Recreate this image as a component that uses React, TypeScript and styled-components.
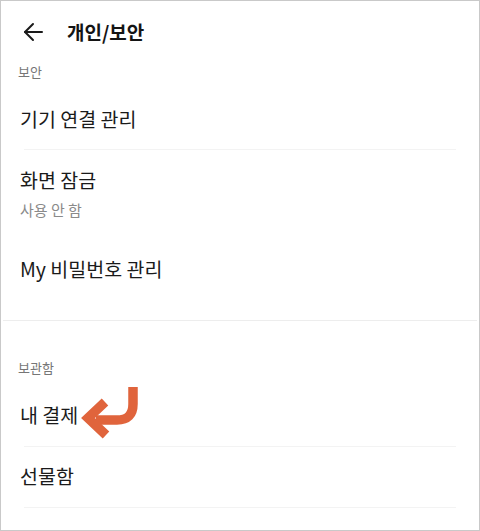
import React from "react";
import styled, { createGlobalStyle } from "styled-components";

const GlobalStyle = createGlobalStyle`
  html, body { margin: 0; padding: 0; background: #ffffff; }
  body { font-family: "Noto Sans CJK KR", "Noto Sans", sans-serif; -webkit-font-smoothing: antialiased; }
  * { box-sizing: border-box; }
`;

const Screen = styled.div`
  width: 480px;
  height: 531px;
  border: 1px solid #c9c9c9;
  background: #fff;
  overflow: hidden;
  display: flex;
  flex-direction: column;
`;

const Header = styled.header`
  height: 63px;
  display: grid;
  grid-template-columns: 20px auto;
  column-gap: 24px;
  justify-content: start;
  align-items: center;
  padding: 0 0 1px 22px;
  flex-shrink: 0;
`;

const BackButton = styled.button`
  width: 20px;
  height: 20px;
  padding: 0;
  margin: 0;
  border: 0;
  background: none;
  display: block;
  color: #1a1a1a;
  svg { display: block; }
`;

const Title = styled.h1`
  margin: 0;
  font-size: 19px;
  line-height: 26px;
  font-weight: 700;
  color: #141414;
`;

const Section = styled.section<{ $top?: number }>`
  display: flex;
  flex-direction: column;
  padding-top: ${(p) => p.$top ?? 0}px;
`;

const SectionLabel = styled.div`
  padding: 0 17px 10px;
  font-size: 13px;
  line-height: 16px;
  color: #767676;
`;

const Row = styled.div<{ $height?: number; $divider?: boolean }>`
  position: relative;
  min-height: ${(p) => p.$height ?? 60}px;
  padding: 0 19px 3px;
  display: flex;
  flex-direction: column;
  justify-content: center;
  gap: 8px;
  &::after {
    content: "";
    display: ${(p) => (p.$divider ? "block" : "none")};
    position: absolute;
    left: 23px;
    right: 23px;
    bottom: 0;
    height: 1px;
    background: #f3f3f3;
  }
`;

const RowTitle = styled.div`
  font-size: 19.5px;
  line-height: 24px;
  color: #1a1a1a;
`;

const RowSub = styled.div`
  font-size: 15px;
  line-height: 20px;
  color: #8a8a8a;
`;

const SectionDivider = styled.div`
  height: 1px;
  background: #ededed;
  margin: 20px 2px 0;
`;

const Annotation = styled.svg`
  position: absolute;
  left: 79px;
  top: -2px;
  width: 62px;
  height: 56px;
  overflow: visible;
`;

const BackArrow = () => (
  <svg width="20" height="20" viewBox="0 0 20 20" fill="none" stroke="currentColor" strokeWidth="2" strokeLinecap="round" strokeLinejoin="round">
    <path d="M19 10H2" />
    <path d="M10 2L2 10L10 18" />
  </svg>
);

const CurvedArrow = () => (
  <Annotation viewBox="0 0 62 56">
    <path d="M53 3 V20 Q53 36 37 36 H16" fill="none" stroke="#E0643C" strokeWidth="9.5" />
    <path d="M25 18 L8 34 L26 51" fill="none" stroke="#E0643C" strokeWidth="9.5" strokeLinejoin="miter" />
  </Annotation>
);

export default function App() {
  return (
    <>
      <GlobalStyle />
      <Screen>
        <Header>
          <BackButton aria-label="back">
            <BackArrow />
          </BackButton>
          <Title>개인/보안</Title>
        </Header>
        <Section>
          <SectionLabel>보안</SectionLabel>
          <Row $divider>
            <RowTitle>기기 연결 관리</RowTitle>
          </Row>
          <Row $height={90}>
            <RowTitle>화면 잠금</RowTitle>
            <RowSub>사용 안 함</RowSub>
          </Row>
          <Row>
            <RowTitle>My 비밀번호 관리</RowTitle>
          </Row>
        </Section>
        <SectionDivider />
        <Section $top={39}>
          <SectionLabel>보관함</SectionLabel>
          <Row $divider $height={61}>
            <RowTitle>내 결제</RowTitle>
            <CurvedArrow />
          </Row>
          <Row $divider $height={61}>
            <RowTitle>선물함</RowTitle>
          </Row>
        </Section>
      </Screen>
    </>
  );
}
